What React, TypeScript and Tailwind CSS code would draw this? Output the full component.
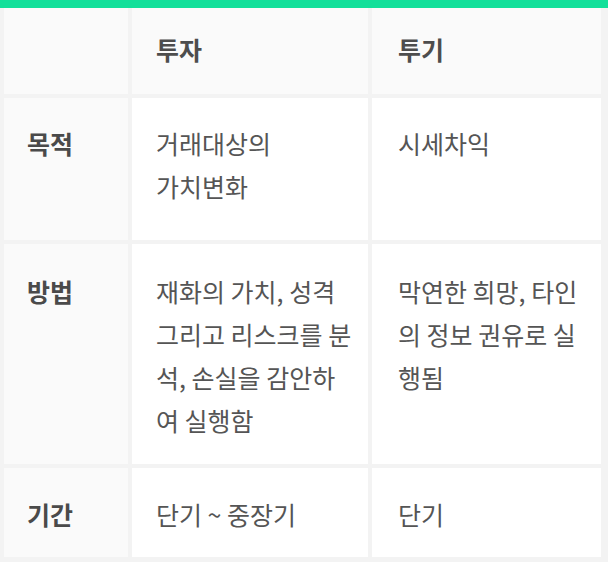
import React from 'react';

// 투자 vs 투기 comparison table
const rows = [
  { label: '목적', invest: ['거래대상의', '가치변화'], spec: ['시세차익'], h: 'pt-6' },
  { label: '방법', invest: ['재화의 가치, 성격 그리고 리스크를 분석, 손실을 감안하여 실행함'], spec: ['막연한 희망, 타인의 정보 권유로 실행됨'], h: 'pt-[26px]' },
  { label: '기간', invest: ['단기 ~ 중장기'], spec: ['단기'], h: 'pt-[25px]' },
];

const App: React.FC = () => {
  return (
    <div className="w-[608px] h-[562px] bg-[#f3f3f3] font-['Noto_Sans_CJK_KR','Noto_Sans',sans-serif] text-[25px] leading-[43px] text-[#555]">
      <div className="h-2 bg-[#12e09a]" />
      <div className="grid grid-cols-[124px_236px_229px] grid-rows-[86px_142px_220px_89px] gap-1 pl-1 pr-[7px]">
        {/* header */}
        <div className="bg-[#fafafa]" />
        <div className="bg-[#fafafa] flex items-center pb-1 pl-6 font-bold text-[#4d4d4d]">투자</div>
        <div className="bg-[#fafafa] flex items-center pb-1 pl-[26px] font-bold text-[#4d4d4d]">투기</div>

        {rows.map((r) => (
          <React.Fragment key={r.label}>
            <div className={`bg-[#fafafa] pl-[23px] font-bold text-[#4a4a4a] ${r.h}`}>{r.label}</div>
            <div className={`bg-white pl-6 pr-3 ${r.h}`}>
              {r.invest.map((t) => (
                <div key={t}>{t}</div>
              ))}
            </div>
            <div className={`bg-white pl-[26px] pr-2 ${r.h}`}>
              {r.spec.map((t) => (
                <div key={t}>{t}</div>
              ))}
            </div>
          </React.Fragment>
        ))}
      </div>
    </div>
  );
};

export default App;
